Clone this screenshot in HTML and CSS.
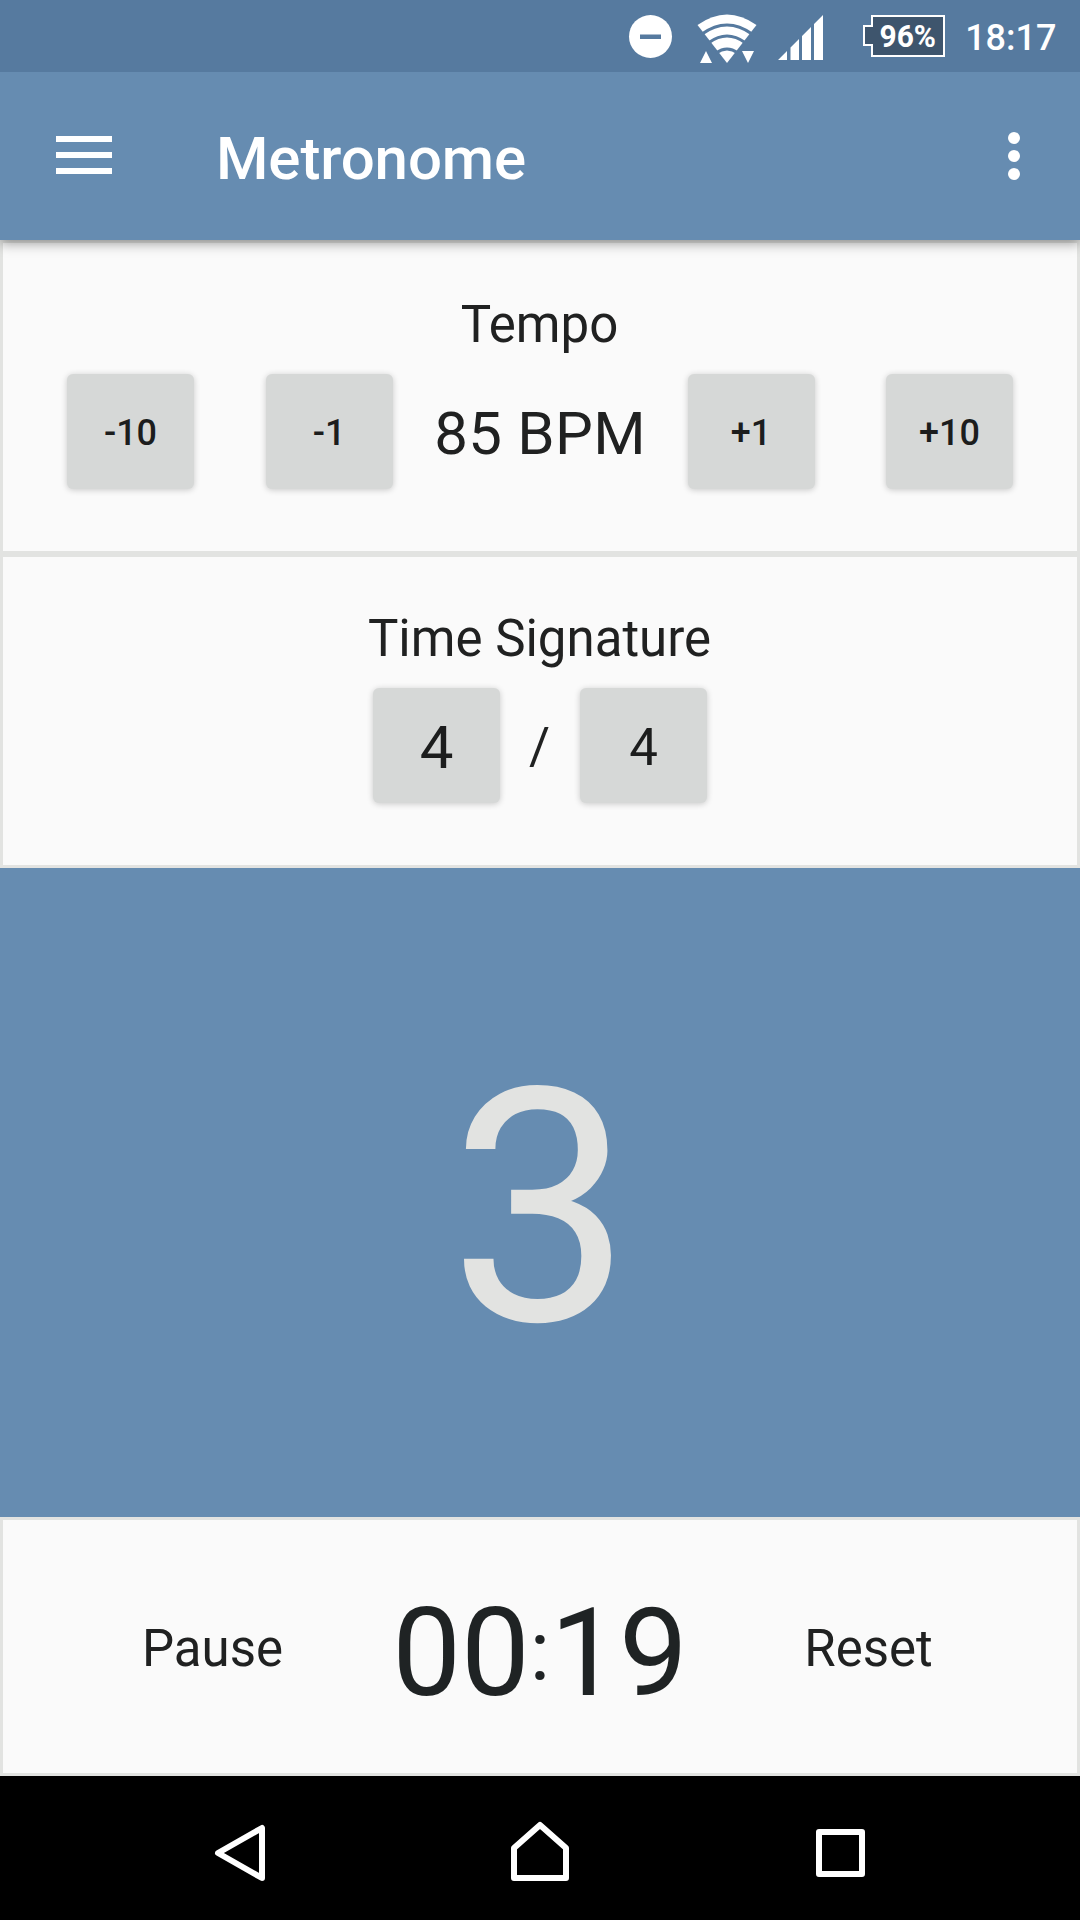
FILE: index.html
```html
<!DOCTYPE html>
<html lang="en">
<head>
<meta charset="utf-8">
<title>Metronome</title>
<link rel="stylesheet" href="styles.css">
</head>
<body>
<div class="screen">
  <header class="status-bar">
    <svg class="status-icons" width="370" height="72" viewBox="610 0 370 72">
      <circle cx="650.5" cy="36.5" r="21.5" fill="#fff"/>
      <rect x="640" y="34.5" width="21" height="4.5" fill="#567a9f"/>
      <path d="M697.5 25Q727 4 756.500 25L727 63Z" fill="#fff"/>
      <g fill="none" stroke="#567a9f" stroke-width="3">
        <path d="M702 34Q727 16 752 34"/>
        <path d="M709 42.500Q727 29.500 745 42.500"/>
        <path d="M716 53Q727 45 738 53"/>
      </g>
      <path d="M706 51L712 63H700Z M742 51H754L748 63Z" fill="#fff"/>
      <path d="M823 15V60H814V24Z M811 27V60H802V36Z M799 39V60H790.500V47.500Z M787 51V60H778Z" fill="#fff"/>
      <path d="M872 16H944V56H872V45H864V26H872Z" fill="#3e556d" stroke="#fff" stroke-width="2"/>
      <text class="battery-text" x="879.5" y="46.5" textLength="56.5" lengthAdjust="spacingAndGlyphs">96%</text>
    </svg>
    <span class="clock">18:17</span>
  </header>

  <div class="app-bar">
    <svg class="menu-icon" width="56" height="38" viewBox="0 0 56 38"><path d="M0 0H56V6H0ZM0 16H56V22H0ZM0 32H56V38H0Z" fill="#fff"/></svg>
    <h1 class="title">Metronome</h1>
    <svg class="more-icon" width="12" height="48" viewBox="0 0 12 48" fill="#fff"><circle cx="6" cy="6" r="6"/><circle cx="6" cy="24" r="6"/><circle cx="6" cy="42" r="6"/></svg>
  </div>

  <main class="content">
    <section class="card">
      <h2 class="label">Tempo</h2>
      <div class="row tempo-row">
        <button class="btn">-10</button>
        <button class="btn">-1</button>
        <span class="bpm">85 BPM</span>
        <button class="btn">+1</button>
        <button class="btn">+10</button>
      </div>
    </section>

    <section class="card">
      <h2 class="label">Time Signature</h2>
      <div class="row signature-row">
        <button class="btn btn-beats">4</button>
        <span class="slash">/</span>
        <button class="btn btn-unit">4</button>
      </div>
    </section>

    <section class="beat"><span class="beat-number">3</span></section>

    <section class="card timer-card">
      <span class="action pause">Pause</span>
      <span class="timer">00<span class="colon">:</span>19</span>
      <span class="action reset">Reset</span>
    </section>
  </main>

  <nav class="nav-bar">
    <svg width="60" height="64" viewBox="210 1820 60 64" fill="none" stroke="#fff" stroke-width="6" stroke-linejoin="round"><path d="M262 1828V1878L218 1853Z"/></svg>
    <svg width="60" height="64" viewBox="510 1820 60 64" fill="none" stroke="#fff" stroke-width="6" stroke-linejoin="round"><path d="M514 1878V1848L540 1825L566 1848V1878Z"/></svg>
    <svg width="60" height="64" viewBox="810 1820 60 64" fill="none" stroke="#fff" stroke-width="6" stroke-linejoin="round"><path d="M819 1832H862V1874H819Z"/></svg>
  </nav>
</div>
</body>
</html>
```
FILE: styles.css
```css
* {
  box-sizing: border-box;
}

body {
  margin: 0;
  font-family: Roboto, "Liberation Sans", sans-serif;
  color: #202121;
}

.screen {
  width: 1080px;
  height: 1920px;
  display: flex;
  flex-direction: column;
  overflow: hidden;
}

.status-bar {
  height: 72px;
  flex: none;
  display: flex;
  justify-content: flex-end;
  align-items: center;
  padding-right: 23.5px;
  background: #567a9f;
  color: #fff;
  z-index: 2;
}

.status-icons {
  margin-right: -14.5px;
}

.battery-text {
  font-size: 32px;
  font-weight: 700;
  fill: #fff;
}

.clock {
  font-size: 36px;
  font-weight: 500;
  line-height: 42px;
  padding-top: 4px;
}

.app-bar {
  height: 168px;
  flex: none;
  display: flex;
  align-items: center;
  padding: 0 60px 0 56px;
  background: #668cb1;
  color: #fff;
  box-shadow: 0 3px 12px rgba(0, 0, 0, 0.4);
  z-index: 1;
}

.menu-icon {
  margin-bottom: 2px;
}

.title {
  flex: 1;
  margin: 0 0 0 104px;
  padding-top: 6px;
  font-size: 60px;
  font-weight: 500;
  line-height: 70px;
  letter-spacing: -0.1px;
}

.content {
  display: flex;
  flex-direction: column;
}

.card {
  height: 314px;
  background: #fafafa;
  border: 3px solid #e2e3e1;
  text-align: center;
}

.label {
  margin: 0;
  padding: 52px 1px 0 0;
  font-size: 51px;
  font-weight: 400;
  line-height: 60px;
}

.row {
  display: flex;
  align-items: center;
  height: 115px;
  margin-top: 19px;
}

.tempo-row {
  justify-content: space-between;
  padding: 0 64px;
}

.btn {
  width: 127px;
  height: 115px;
  padding: 2px 0 0;
  border: 0;
  border-radius: 6px;
  background: #d6d8d7;
  box-shadow: 0 1px 6px rgba(0, 0, 0, 0.2);
  color: #1c1d1d;
  font: 500 36px/42px Roboto, "Liberation Sans", sans-serif;
}

.bpm {
  width: 152px;
  display: flex;
  justify-content: center;
  white-space: nowrap;
  font-size: 60px;
  line-height: 70px;
  letter-spacing: 0.3px;
  padding-top: 5px;
}

.signature-row {
  justify-content: center;
}

.slash {
  width: 80px;
  padding: 2px 1px 0 0;
  font-size: 51px;
  line-height: 60px;
}

.btn-beats {
  padding: 5px 0 0;
  font-size: 60px;
  font-weight: 400;
}

.btn-unit {
  padding-top: 4px;
  font-size: 51px;
  font-weight: 400;
}

.beat {
  height: 649px;
  display: flex;
  justify-content: center;
  align-items: center;
  background: #668cb1;
  color: #e2e3e1;
}

.beat-number {
  padding: 32px 0 0 1px;
  font-size: 326px;
  line-height: 380px;
}

.timer-card {
  height: 259px;
  display: grid;
  grid-template-columns: 417px 240px 417px;
  align-items: center;
}

.action {
  padding-top: 4px;
  font-size: 51px;
  line-height: 60px;
}

.pause {
  padding-left: 2px;
}

.timer {
  display: flex;
  justify-content: center;
  align-items: baseline;
  padding-top: 12px;
  color: #1f2324;
  font-size: 122.5px;
  line-height: 142px;
}

/* Smaller colon lifted to the middle of the digits */
.colon {
  font-size: 84px;
  line-height: 84px;
  transform: translateY(-15px);
}

.nav-bar {
  height: 144px;
  flex: none;
  display: flex;
  justify-content: center;
  align-items: center;
  gap: 240px;
  background: #000;
}

.nav-bar svg {
  margin-top: 8px;
}
```
